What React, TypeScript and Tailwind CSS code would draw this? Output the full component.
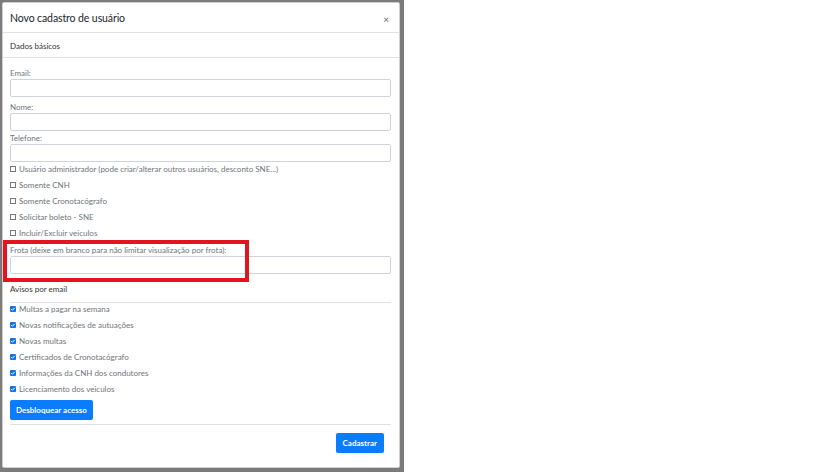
import React from 'react'

const font = { fontFamily: 'Lato, "Open Sans", sans-serif' }

function Field({ label, className = '' }: { label: string; className?: string }) {
  return (
    <div className={className}>
      <div className="h-[12px] leading-[12px] text-[8px] text-[#6c757d]">{label}</div>
      <div className="h-[18px] border border-[#ced4da] rounded-[2px] bg-white" />
    </div>
  )
}

function Unchecked({ label }: { label: string }) {
  return (
    <div className="h-[16px] flex items-center gap-[3px] text-[8px] text-[#6c757d]">
      <span className="w-[6px] h-[6px] border border-[#777] bg-white" />
      <span>{label}</span>
    </div>
  )
}

function Checked({ label }: { label: string }) {
  return (
    <div className="h-[16px] flex items-center gap-[3px] text-[8px] text-[#6c757d]">
      <span className="w-[6px] h-[6px] rounded-[1px] bg-[#0b74e5] flex items-center justify-center">
        <svg viewBox="0 0 6 6" className="w-[6px] h-[6px]">
          <path d="M1.2 3.1 L2.4 4.3 L4.8 1.7" stroke="white" strokeWidth="1" fill="none" />
        </svg>
      </span>
      <span>{label}</span>
    </div>
  )
}

export default function App() {
  return (
    <div className="w-[819px] h-[472px] bg-white flex" style={font}>
      <div className="w-[404px] h-[472px] bg-[#7b7b7b] pt-[2px] pl-[2px]">
        <div className="relative w-[398px] h-[466px] bg-white border border-[#cfcfcf] rounded-[2px] flex flex-col">
          <div className="h-[30px] border-b border-[#dee2e6] flex items-center justify-between pl-[7px] pr-[10px] pt-[3px]">
            <span className="text-[10.5px] tracking-[-0.1px] text-[#212529]">Novo cadastro de usuário</span>
            <span className="text-[10px] text-[#666] leading-none">×</span>
          </div>
          <div className="h-[25px] border-b border-[#dee2e6] flex items-center pl-[7px] pt-[1px] text-[8px] text-[#333]">
            Dados básicos
          </div>
          <div className="px-[7px] pr-[8px] flex flex-col">
            <Field label="Email:" className="mt-[9px]" />
            <Field label="Nome:" className="mt-[4px]" />
            <Field label="Telefone:" className="mt-[1px]" />
            <div className="flex flex-col -mt-[1px]">
              <Unchecked label="Usuário administrador (pode criar/alterar outros usuários, desconto SNE...)" />
              <Unchecked label="Somente CNH" />
              <Unchecked label="Somente Cronotacógrafo" />
              <Unchecked label="Solicitar boleto - SNE" />
              <Unchecked label="Incluir/Excluir veiculos" />
            </div>
            <Field label="Frota (deixe em branco para não limitar visualização por frota):" className="mt-[3px]" />
            <div className="h-[29px] border-b border-[#dee2e6] flex items-center text-[8px] text-[#333] pt-[1px]">
              Avisos por email
            </div>
            <div className="flex flex-col -mt-[2px]">
              <Checked label="Multas a pagar na semana" />
              <Checked label="Novas notificações de autuações" />
              <Checked label="Novas multas" />
              <Checked label="Certificados de Cronotacógrafo" />
              <Checked label="Informações da CNH dos condutores" />
              <Checked label="Licenciamento dos veiculos" />
            </div>
            <div className="flex mt-[3px]">
              <button className="h-[20px] px-[6px] rounded-[2px] bg-[#0b7bff] text-white text-[8px] font-bold">
                Desbloquear acesso
              </button>
            </div>
            <div className="mt-[4px] border-t border-[#dee2e6]" />
            <div className="flex justify-end pr-[7px] mt-[8px]">
              <button className="h-[20px] px-[7px] rounded-[2px] bg-[#0b7bff] text-white text-[8px] font-bold">
                Cadastrar
              </button>
            </div>
          </div>
          <div className="absolute left-[0px] top-[237px] w-[246px] h-[42px] border-[4px] border-[#e3131f]" />
        </div>
      </div>
    </div>
  )
}
